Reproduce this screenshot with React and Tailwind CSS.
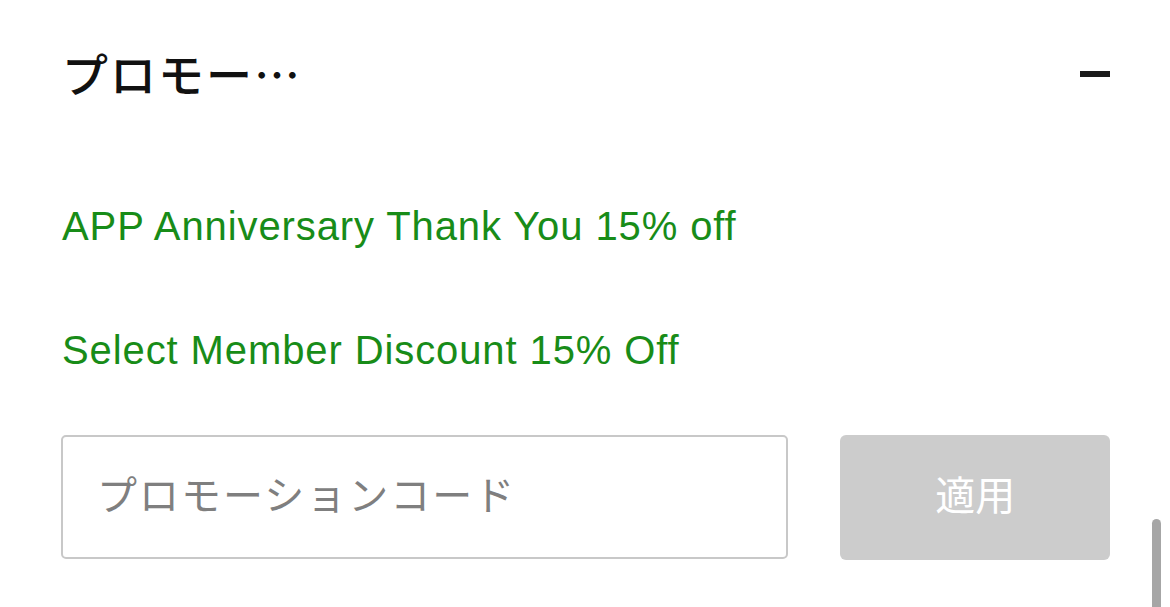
export default function App() {
  const jp = { fontFamily: '"Noto Sans CJK JP", "Noto Sans", sans-serif' };
  const en = { fontFamily: '"Liberation Sans", Arial, sans-serif' };
  return (
    <div className="relative w-[1170px] h-[607px] overflow-hidden bg-white pl-[62px] pr-[60px]">
      <div className="flex items-center justify-between h-[56px] mt-[46px]">
        <div className="text-[46px] leading-[56px] font-medium tracking-[2px] text-[#111111] -mt-[5px]" style={jp}>
          プロモー…
        </div>
        <div className="w-[30px] h-[6px] bg-[#1a1a1a]" />
      </div>
      <div className="mt-[100px] text-[40px] leading-[48px] tracking-[0.9px] text-[#188c18]" style={en}>
        APP Anniversary Thank You 15% off
      </div>
      <div className="mt-[76px] text-[40px] leading-[48px] tracking-[0.9px] text-[#188c18]" style={en}>
        Select Member Discount 15% Off
      </div>
      <div className="flex items-start gap-[52px] mt-[61px] -ml-[1px]">
        <input
          type="text"
          placeholder="プロモーションコード"
          className="w-[728px] h-[124px] border-2 border-[#c8c8c8] rounded-[5px] pl-[34px] pb-[8px] text-[40px] tracking-[2px] text-[#333] placeholder:text-[#7f7f7f] outline-none"
          style={jp}
        />
        <button
          className="w-[270px] h-[125px] rounded-[6px] bg-[#cccccc] text-white text-[40px] pb-[10px] flex items-center justify-center"
          style={jp}
        >
          適用
        </button>
      </div>
      <div className="absolute right-[9px] top-[519px] w-[9px] h-[100px] rounded-full bg-[#a6a6a6]" />
    </div>
  );
}
